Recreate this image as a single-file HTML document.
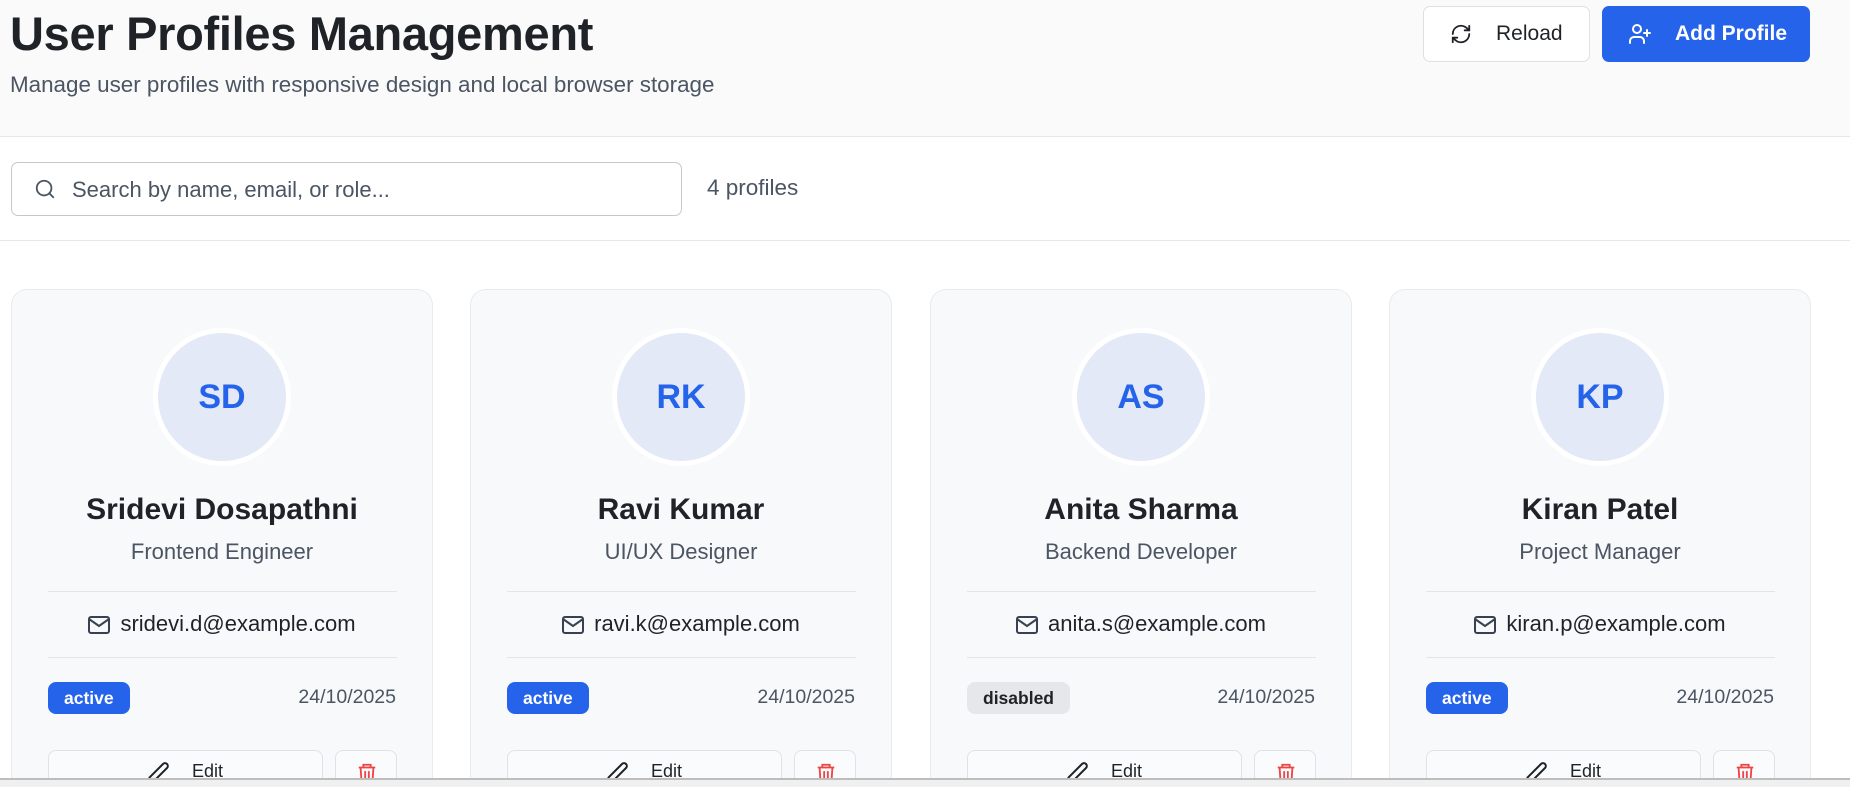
<!DOCTYPE html>
<html style="overflow:hidden;height:787px"><head><meta charset="utf-8"><style>
*{box-sizing:border-box;margin:0;padding:0}
html{width:1850px;height:787px;overflow:hidden}
body{width:1850px;height:787px;overflow:hidden;background:#fff;font-family:"Liberation Sans",sans-serif;color:#1f2328;position:relative}
.hdr{position:absolute;left:0;top:0;width:1850px;height:137px;background:#fafafa;border-bottom:1px solid #e5e7eb}
h1{position:absolute;left:10px;top:6px;font-size:47px;font-weight:700;color:#1f2328;letter-spacing:-0.3px}
.sub{position:absolute;left:10px;top:72px;font-size:22.4px;color:#4b5563}
.btn{position:absolute;top:6px;height:56px;border-radius:7px;display:flex;align-items:center;font-size:21px}
.reload{left:1423px;width:167px;background:#fff;border:1px solid #e0e0e0;color:#1f2328}
.add{left:1602px;width:208px;background:#2563eb;color:#fff;font-weight:700}
.search{position:absolute;left:11px;top:162px;width:671px;height:54px;border:1px solid #c4c7cc;border-radius:7px;background:#fff}
.search span{position:absolute;left:60px;top:14px;font-size:22px;color:#4b5563}
.count{position:absolute;left:707px;top:175px;font-size:22.5px;color:#4b5563}
.line2{position:absolute;left:0;top:240px;width:1850px;height:1px;background:#e5e7eb}
.card{position:absolute;top:289px;width:422px;height:489px;background:#f8f9fb;border:1px solid #e8eaed;border-bottom:none;border-radius:16px 16px 0 0;overflow:hidden}
.av{position:absolute;left:141px;top:38px;width:138px;height:138px;border-radius:50%;background:#e3e9f7;border:5px solid #fff;display:flex;align-items:center;justify-content:center;color:#2563eb;font-size:34px;font-weight:700}
.nm{position:absolute;left:0;width:100%;top:203px;text-align:center;font-size:30px;font-weight:700;color:#1f2328}
.rl{position:absolute;left:0;width:100%;top:249px;text-align:center;font-size:22px;color:#4b5563}
.dv{position:absolute;left:36px;width:349px;height:1px;background:#e3e5e8}
.em{position:absolute;left:0;width:100%;top:321px;text-align:center;font-size:22px;color:#1f2328}
.em svg{vertical-align:-3px;margin-right:10px}
.bd{position:absolute;left:36px;top:392px;height:32px;padding:0 16px;border-radius:8px;font-size:17.5px;font-weight:700;line-height:32px}
.act{background:#2563eb;color:#fff}.dis{background:#e5e7eb;color:#1f2328}
.dt{position:absolute;right:36px;top:396px;font-size:19.5px;color:#4b5563}
.eb{position:absolute;left:36px;top:460px;width:275px;height:60px;border:1px solid #e0e2e6;border-radius:8px;background:#fafbfc;font-size:18px}
.eb span{position:absolute;left:143px;top:10px}
.eb svg{position:absolute;left:97px;top:10px}
.tb{position:absolute;left:323px;top:460px;width:62px;height:60px;border:1px solid #e0e2e6;border-radius:8px;background:#fafbfc}
.tb svg{position:absolute;left:20px;top:10px}
.sb{position:absolute;left:0;top:778px;width:1850px;height:9px;background:#f0f0f0;border-top:2px solid #bdbdbd;z-index:10}
</style></head><body>
<div class="hdr">
<h1>User Profiles Management</h1>
<div class="sub">Manage user profiles with responsive design and local browser storage</div>
<div class="btn reload"><svg style="margin-left:26px" width="22" height="22" viewBox="0 0 24 24" fill="none" stroke="#1f2328" stroke-width="2" stroke-linecap="round" stroke-linejoin="round"><path d="M3 12a9 9 0 0 1 15-6.7L21 8"/><path d="M21 3v5h-5"/><path d="M21 12a9 9 0 0 1-15 6.7L3 16"/><path d="M8 16H3v5"/></svg><span style="margin-left:24px">Reload</span></div>
<div class="btn add"><svg style="margin-left:26px" width="24" height="24" viewBox="0 0 24 24" fill="none" stroke="#fff" stroke-width="2" stroke-linecap="round" stroke-linejoin="round"><path d="M16 21v-2a4 4 0 0 0-4-4H6a4 4 0 0 0-4 4v2"/><circle cx="9" cy="7" r="4"/><path d="M19 8v6M22 11h-6"/></svg><span style="margin-left:23px">Add Profile</span></div>
</div>
<div class="search"><svg style="position:absolute;left:22px;top:15px" width="22" height="22" viewBox="0 0 24 24" fill="none" stroke="#4b5563" stroke-width="2" stroke-linecap="round"><circle cx="11" cy="11" r="8"/><path d="m21 21-4.3-4.3"/></svg><span>Search by name, email, or role...</span></div>
<div class="count">4 profiles</div>
<div class="line2"></div>

<div class="card" style="left:11px"><div class="av">SD</div><div class="nm">Sridevi Dosapathni</div><div class="rl">Frontend Engineer</div><div class="dv" style="top:301px"></div><div class="em"><svg width="22" height="18" viewBox="0 0 22 18" fill="none" stroke="#374151" stroke-width="2"><rect x="1" y="1" width="20" height="16" rx="2"/><path d="m1 3 10 7 10-7"/></svg>sridevi.d@example.com</div><div class="dv" style="top:367px"></div><div class="bd act">active</div><div class="dt">24/10/2025</div><div class="eb"><svg width="24" height="24" viewBox="0 0 24 24" fill="none" stroke="#1f2328" stroke-width="2"><path d="M17 3a2.8 2.8 0 0 1 4 4L7.5 20.5 2 22l1.5-5.5z"/></svg><span>Edit</span></div><div class="tb"><svg width="22" height="24" viewBox="0 0 24 24" fill="none" stroke="#ef4444" stroke-width="2"><path d="M3 6h18M8 6V3h8v3M5 6l1 15h12l1-15M10 10v8M14 10v8"/></svg></div></div>

<div class="card" style="left:470px"><div class="av">RK</div><div class="nm">Ravi Kumar</div><div class="rl">UI/UX Designer</div><div class="dv" style="top:301px"></div><div class="em"><svg width="22" height="18" viewBox="0 0 22 18" fill="none" stroke="#374151" stroke-width="2"><rect x="1" y="1" width="20" height="16" rx="2"/><path d="m1 3 10 7 10-7"/></svg>ravi.k@example.com</div><div class="dv" style="top:367px"></div><div class="bd act">active</div><div class="dt">24/10/2025</div><div class="eb"><svg width="24" height="24" viewBox="0 0 24 24" fill="none" stroke="#1f2328" stroke-width="2"><path d="M17 3a2.8 2.8 0 0 1 4 4L7.5 20.5 2 22l1.5-5.5z"/></svg><span>Edit</span></div><div class="tb"><svg width="22" height="24" viewBox="0 0 24 24" fill="none" stroke="#ef4444" stroke-width="2"><path d="M3 6h18M8 6V3h8v3M5 6l1 15h12l1-15M10 10v8M14 10v8"/></svg></div></div>

<div class="card" style="left:930px"><div class="av">AS</div><div class="nm">Anita Sharma</div><div class="rl">Backend Developer</div><div class="dv" style="top:301px"></div><div class="em"><svg width="22" height="18" viewBox="0 0 22 18" fill="none" stroke="#374151" stroke-width="2"><rect x="1" y="1" width="20" height="16" rx="2"/><path d="m1 3 10 7 10-7"/></svg>anita.s@example.com</div><div class="dv" style="top:367px"></div><div class="bd dis">disabled</div><div class="dt">24/10/2025</div><div class="eb"><svg width="24" height="24" viewBox="0 0 24 24" fill="none" stroke="#1f2328" stroke-width="2"><path d="M17 3a2.8 2.8 0 0 1 4 4L7.5 20.5 2 22l1.5-5.5z"/></svg><span>Edit</span></div><div class="tb"><svg width="22" height="24" viewBox="0 0 24 24" fill="none" stroke="#ef4444" stroke-width="2"><path d="M3 6h18M8 6V3h8v3M5 6l1 15h12l1-15M10 10v8M14 10v8"/></svg></div></div>

<div class="card" style="left:1389px"><div class="av">KP</div><div class="nm">Kiran Patel</div><div class="rl">Project Manager</div><div class="dv" style="top:301px"></div><div class="em"><svg width="22" height="18" viewBox="0 0 22 18" fill="none" stroke="#374151" stroke-width="2"><rect x="1" y="1" width="20" height="16" rx="2"/><path d="m1 3 10 7 10-7"/></svg>kiran.p@example.com</div><div class="dv" style="top:367px"></div><div class="bd act">active</div><div class="dt">24/10/2025</div><div class="eb"><svg width="24" height="24" viewBox="0 0 24 24" fill="none" stroke="#1f2328" stroke-width="2"><path d="M17 3a2.8 2.8 0 0 1 4 4L7.5 20.5 2 22l1.5-5.5z"/></svg><span>Edit</span></div><div class="tb"><svg width="22" height="24" viewBox="0 0 24 24" fill="none" stroke="#ef4444" stroke-width="2"><path d="M3 6h18M8 6V3h8v3M5 6l1 15h12l1-15M10 10v8M14 10v8"/></svg></div></div>

<div class="sb"></div>
</body></html>
